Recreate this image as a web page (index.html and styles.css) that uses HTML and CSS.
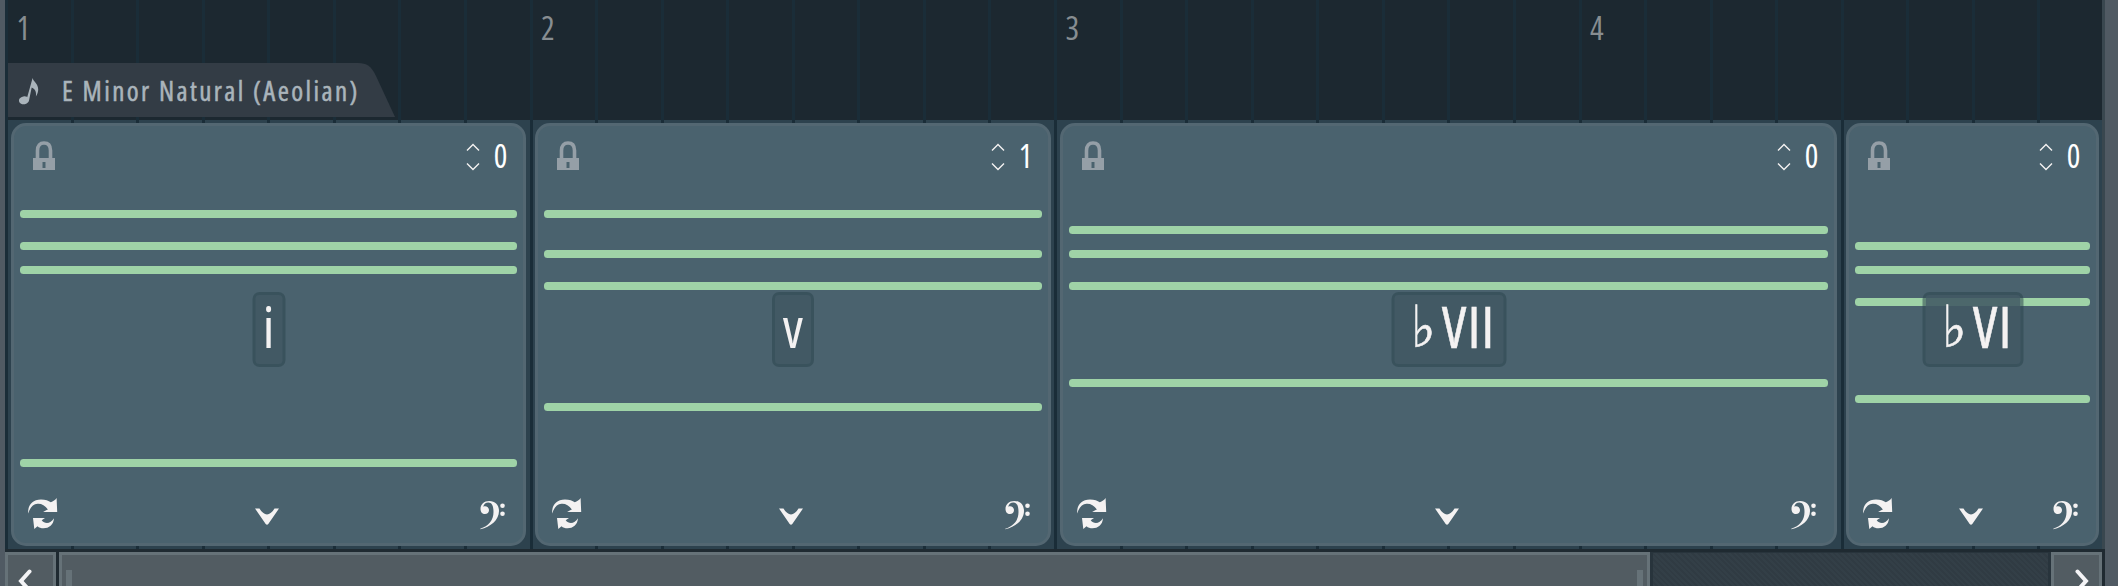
FILE: index.html
```html
<!DOCTYPE html>
<html lang="en">
<head>
    <meta charset="UTF-8">
    <meta name="viewport" content="width=device-width, initial-scale=1.0">
    <title>Chord Progression</title>
    <link rel="stylesheet" href="styles.css">
</head>
<body>

    <!-- shared icons -->
    <svg class="sprite">
        <symbol id="lock" viewBox="0 0 22 29">
            <path d="M4.500 17V9.500C4.500 4.500 7 2 11 2s6.500 2.500 6.500 7.500V17" fill="none" stroke="currentColor" stroke-width="3.600"/>
            <path fill-rule="evenodd" d="M0 17h22v12H0zM9.500 21h3v6h-3z" fill="currentColor"/>
        </symbol>
        <symbol id="spin" viewBox="0 0 14 28">
            <path d="M1 7.500 7 1.500l6 6M1 20.500l6 6 6-6" fill="none" stroke="currentColor" stroke-width="1.400"/>
        </symbol>
        <symbol id="cycle" viewBox="0 0 30 31">
            <path d="M.2 15.500C-.5 8 4 1.500 13 1.500c4.500 0 7.500 1.200 9.800 2.800C25 3.500 27.300 2 28.600 0L29.200 14H15.200c1-.8 2-1.600 4.700-2.600C17 7.500 13.500 5.500 9.500 5.800 5 6.300 2 9.500.2 15.500z" fill="currentColor"/>
            <path d="M5 20h12l-3.300 2.300c3 4 9 3.700 12.300-2-.5 6.700-5 10-10.500 10-2.500 0-4.500-.8-6-2.100L6.300 31z" fill="currentColor"/>
        </symbol>
        <symbol id="down" viewBox="0 0 24 17">
            <path d="M0 .5h4.500C6.500 4 9.500 6.500 12 6.500s5.500-2.500 7.500-6H24L13.300 16c-.8 1-1.800 1-2.600 0z" fill="currentColor"/>
        </symbol>
        <symbol id="clef" viewBox="0 0 25 29">
            <path d="M.2 27.700C8.500 25 13.500 19.500 13.500 11c0-6-1.500-9.500-5.200-9.500-2.500 0-4.500 1.500-5.100 4.200 2.800-1.200 5.800.5 5.800 3.500 0 2.300-1.700 3.900-4 3.900C2.300 13.100.5 11 .5 8 .5 3.500 4 0 9.300 0c6 0 9.700 4 9.700 10 0 9-8.500 16-18.600 18.300z" fill="currentColor"/>
            <circle cx="22.500" cy="4.700" r="2.300" fill="currentColor"/>
            <circle cx="22.500" cy="12.700" r="2.300" fill="currentColor"/>
        </symbol>
    </svg>

    <div class="edge edge-left"></div>

    <div class="editor">
        <div class="timeline">
            <div class="beats">
                <i></i><i></i><i></i><i></i><i></i><i></i><i></i><i></i>
                <i></i><i></i><i></i><i></i><i></i><i></i><i></i><i></i>
                <i></i><i></i><i></i><i></i><i></i><i></i><i></i><i></i>
                <i></i><i></i><i></i><i></i><i></i><i></i><i></i><i></i>
            </div>

            <div class="ruler">
                <span>1</span>
                <span>2</span>
                <span>3</span>
                <span>4</span>
            </div>

            <div class="scale">
                <svg class="scale-shape" viewBox="0 0 387 54">
                    <path d="M0 0H350C359 0 363 3 368 13L387 54H0z" fill="#333c45"/>
                </svg>
                <svg class="scale-note" viewBox="0 0 20 27">
                    <ellipse cx="5" cy="22.300" rx="5.100" ry="4" transform="rotate(-12 5 22.300)" fill="currentColor"/>
                    <path d="M13.600 0c1 4 5.600 5.500 5.600 11.500 0 2.500-.8 4.500-2.300 7 .6-4.500-.4-7-4.200-9L10 22.500 8 20z" fill="currentColor"/>
                </svg>
                <span class="scale-name">E Minor Natural (Aeolian)</span>
            </div>

            <div class="chords">
                <div class="chord">
                    <div class="top">
                        <svg class="lock"><use href="#lock"/></svg>
                        <svg class="spin"><use href="#spin"/></svg>
                        <span class="octave">0</span>
                    </div>
                    <div class="notes">
                        <i style="grid-row: 1"></i>
                        <i style="grid-row: 5"></i>
                        <i style="grid-row: 8"></i>
                        <i style="grid-row: 32"></i>
                    </div>
                    <div class="name name-i"><span>i</span></div>
                    <div class="bottom">
                        <svg class="cycle"><use href="#cycle"/></svg>
                        <svg class="down"><use href="#down"/></svg>
                        <svg class="clef"><use href="#clef"/></svg>
                    </div>
                </div>

                <div class="chord">
                    <div class="top">
                        <svg class="lock"><use href="#lock"/></svg>
                        <svg class="spin"><use href="#spin"/></svg>
                        <span class="octave">1</span>
                    </div>
                    <div class="notes">
                        <i style="grid-row: 1"></i>
                        <i style="grid-row: 6"></i>
                        <i style="grid-row: 10"></i>
                        <i style="grid-row: 25"></i>
                    </div>
                    <div class="name name-v"><span>v</span></div>
                    <div class="bottom">
                        <svg class="cycle"><use href="#cycle"/></svg>
                        <svg class="down"><use href="#down"/></svg>
                        <svg class="clef"><use href="#clef"/></svg>
                    </div>
                </div>

                <div class="chord">
                    <div class="top">
                        <svg class="lock"><use href="#lock"/></svg>
                        <svg class="spin"><use href="#spin"/></svg>
                        <span class="octave">0</span>
                    </div>
                    <div class="notes">
                        <i style="grid-row: 3"></i>
                        <i style="grid-row: 6"></i>
                        <i style="grid-row: 10"></i>
                        <i style="grid-row: 22"></i>
                    </div>
                    <div class="name name-flat name-vii"><em>♭</em><span>VII</span></div>
                    <div class="bottom">
                        <svg class="cycle"><use href="#cycle"/></svg>
                        <svg class="down"><use href="#down"/></svg>
                        <svg class="clef"><use href="#clef"/></svg>
                    </div>
                </div>

                <div class="chord">
                    <div class="top">
                        <svg class="lock"><use href="#lock"/></svg>
                        <svg class="spin"><use href="#spin"/></svg>
                        <span class="octave">0</span>
                    </div>
                    <div class="notes">
                        <i style="grid-row: 5"></i>
                        <i style="grid-row: 8"></i>
                        <i style="grid-row: 12"></i>
                        <i style="grid-row: 24"></i>
                    </div>
                    <div class="name name-flat name-vi"><em>♭</em><span>VI</span></div>
                    <div class="bottom">
                        <svg class="cycle"><use href="#cycle"/></svg>
                        <svg class="down"><use href="#down"/></svg>
                        <svg class="clef"><use href="#clef"/></svg>
                    </div>
                </div>
            </div>
        </div>

        <div class="scrollbar">
            <div class="scroll-button">
                <svg viewBox="0 0 14 24"><path d="M11.500 2.500 3 12l8.500 9.500" fill="none" stroke="currentColor" stroke-width="4" stroke-linecap="round"/></svg>
            </div>
            <div class="thumb">
                <div class="grip"></div>
                <div class="grip"></div>
            </div>
            <div class="groove"></div>
            <div class="scroll-button scroll-right">
                <svg viewBox="0 0 14 24"><path d="M2.500 2.500 11 12l-8.500 9.500" fill="none" stroke="currentColor" stroke-width="4" stroke-linecap="round"/></svg>
            </div>
        </div>
    </div>

    <div class="edge edge-right"></div>

</body>
</html>
```
FILE: styles.css
```css
body {
    margin: 0;
    height: 586px;
    display: flex;
    overflow: hidden;
    background-color: #505a63;
    font-family: "Open Sans", "Noto Sans", sans-serif;
    font-stretch: 75%;
}
.sprite {
    position: absolute;
    width: 0;
    height: 0;
}
svg {
    display: block;
}
.edge {
    background-color: #505a63;
}
.edge-left {
    width: 5px;
}
.edge-right {
    width: 13px;
}
.editor {
    width: 2100px;
    display: flex;
    flex-direction: column;
    background-color: #1f2a31;
}

/* timeline */
.timeline {
    position: relative;
    box-sizing: border-box;
    height: 549px;
    border-right: 3px solid #39474f;
    background: linear-gradient(#1c2830 120px, #2d424e 120px);
    overflow: hidden;
}
.beats {
    position: absolute;
    top: 0;
    left: 0;
    width: 2098px;
    height: 549px;
    display: flex;
}
.beats i {
    flex: 1;
    border-left: 3px solid #1a2d38;
}
.ruler {
    position: relative;
    display: grid;
    grid-template-columns: repeat(4, 524.5px);
    height: 63px;
    color: #878d91;
}
.ruler span {
    padding-left: 11.5px;
    font-size: 32px;
    line-height: 55px;
}
.scale {
    position: relative;
    height: 57px;
    margin-left: 3px;
    display: flex;
    color: #aab4bb;
}
.scale-shape {
    position: absolute;
    width: 387px;
    height: 54px;
}
.scale-note {
    position: relative;
    width: 20px;
    height: 27px;
    margin: 15px 0 0 11px;
}
.scale-name {
    position: relative;
    margin-left: 23px;
    font-size: 27px;
    line-height: 55px;
    letter-spacing: 2.4px;
    white-space: nowrap;
    -webkit-text-stroke: 0.5px;
}

/* chord blocks */
.chords {
    position: relative;
    height: 429px;
    display: grid;
    grid-template-columns: 524px 525px 786px 262px;
}
.chord {
    position: relative;
    box-sizing: border-box;
    margin: 3px 3px 3px 6px;
    border: 3px solid #536772;
    border-radius: 15px;
    background-color: #4a626e;
    color: #f4f2f2;
}
.top {
    height: 84px;
    display: flex;
    padding: 0 16px 0 19px;
    box-sizing: border-box;
}
.lock {
    width: 22px;
    height: 29px;
    margin-top: 15px;
    margin-right: auto;
    color: #959fa7;
}
.spin {
    width: 14px;
    height: 28px;
    margin-top: 17px;
}
.octave {
    width: 13px;
    margin-left: 14px;
    font-size: 32px;
    line-height: 60px;
    display: flex;
    justify-content: center;
    color: #fff;
}
.notes {
    height: 257.3px;
    display: grid;
    grid-template-rows: repeat(32, 1fr);
    padding: 0 6px;
}
.notes i {
    height: 8px;
    border-radius: 3.5px;
    background-color: #9fd3a7;
}
.name {
    position: absolute;
    top: 166px;
    left: 50%;
    transform: translateX(-50%);
    box-sizing: border-box;
    height: 75px;
    border: 3px solid rgba(44, 68, 78, 0.53);
    border-radius: 7px;
    background-color: rgba(65, 88, 99, 0.88);
    background-clip: padding-box;
    display: flex;
    justify-content: center;
    font-size: 56px;
    line-height: 62px;
    white-space: nowrap;
}
.name-flat {
    justify-content: flex-start;
    padding-left: 17px;
    letter-spacing: 1.4px;
    -webkit-text-stroke: 0.5px;
}
.name em {
    margin-right: 5px;
    font-family: "DejaVu Sans", sans-serif;
    font-size: 58px;
    font-style: normal;
    line-height: 65px;
}
.name-i {
    width: 33px;
}
.name-v {
    width: 42px;
}
.name-vii {
    width: 115px;
}
.name-vi {
    width: 101px;
}
.bottom {
    display: grid;
    grid-template-columns: 1fr auto 1fr;
    padding: 31px 18px 0 14px;
}
.cycle {
    width: 30px;
    height: 31px;
}
.down {
    width: 24px;
    height: 17px;
    margin-top: 10px;
}
.clef {
    width: 25px;
    height: 29px;
    margin-top: 3px;
    justify-self: end;
}

/* scrollbar */
.scrollbar {
    height: 34px;
    margin-top: 3px;
    padding-right: 3px;
    display: flex;
    overflow: hidden;
}
.scroll-button {
    box-sizing: border-box;
    width: 51px;
    height: 60px;
    border: 3px solid #667278;
    background-color: #525c62;
    color: #f4f4f6;
}
.scroll-button svg {
    width: 14px;
    height: 24px;
    margin: 14px 0 0 10px;
}
.scroll-right svg {
    margin-left: 21px;
}
.thumb {
    box-sizing: border-box;
    width: 1591px;
    height: 60px;
    margin-left: 3px;
    border: 3px solid #667278;
    background-color: #525c62;
    display: flex;
    justify-content: space-between;
    padding: 15px 4px 0;
}
.grip {
    width: 6px;
    background-color: #667278;
}
.groove {
    flex: 1;
    border: solid #28343c;
    border-width: 1px 3px 0;
    background: repeating-linear-gradient(45deg, #333f47 0, #333f47 2px, #303b43 2px, #303b43 4px);
}
```
